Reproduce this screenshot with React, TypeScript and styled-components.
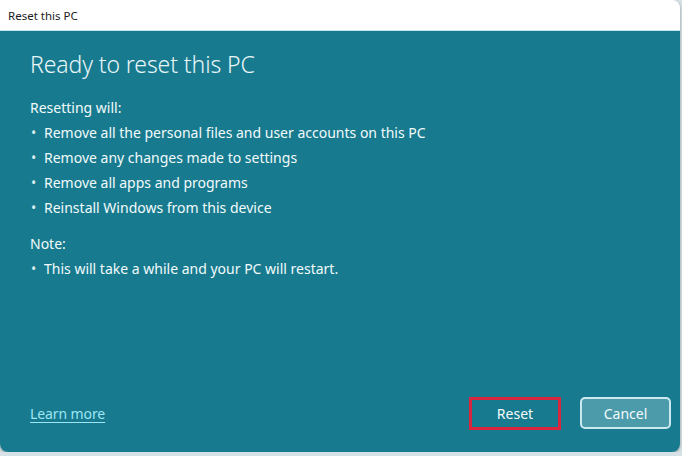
import React from 'react';
import styled, { createGlobalStyle } from 'styled-components';

const GlobalStyle = createGlobalStyle`
  html, body {
    margin: 0;
    padding: 0;
    background: #d6e2e5;
    font-family: "Noto Sans", "Open Sans", sans-serif;
  }
`;

const Window = styled.div`
  width: 680px;
  height: 452px;
  display: flex;
  flex-direction: column;
  border-radius: 0 8px 8px 8px;
  overflow: hidden;
  box-shadow: 0 1px 3px rgba(0, 0, 0, 0.35);
`;

const TitleBar = styled.div`
  height: 30px;
  flex-shrink: 0;
  background: #ffffff;
  border-bottom: 1px solid #bfe6ef;
  display: flex;
  align-items: center;
  padding-left: 8px;
  font-size: 11.5px;
  color: #1b1b1b;
`;

const Body = styled.div`
  flex: 1;
  background: #187a8e;
  color: #f2fafc;
  display: flex;
  flex-direction: column;
  padding: 17px 30px 22px 30px;
`;

const Heading = styled.h1`
  margin: 0 0 18px 0;
  font-size: 23px;
  font-weight: 300;
  letter-spacing: -0.1px;
  color: #e9f6f9;
`;

const Label = styled.div`
  font-size: 14px;
  line-height: 20px;
  margin-bottom: 2px;
`;

const List = styled.ul`
  margin: 0 0 14px 0;
  padding: 0;
  list-style: none;
`;

const Item = styled.li`
  font-size: 14px;
  line-height: 25px;
  display: flex;
  &::before {
    content: '•';
    width: 13px;
    padding-left: 1px;
    color: #d8eef3;
  }
`;

const Spacer = styled.div`
  flex: 1;
`;

const Footer = styled.div`
  display: flex;
  align-items: center;
  justify-content: space-between;
`;

const LearnMore = styled.a`
  font-size: 14px;
  color: #9ee6f5;
  text-decoration: underline;
  text-underline-offset: 3px;
  letter-spacing: -0.1px;
`;

const Buttons = styled.div`
  display: flex;
  gap: 19px;
  margin-right: -21px;
`;

const Button = styled.button<{ $highlight?: boolean }>`
  width: ${({ $highlight }) => ($highlight ? '92px' : '91px')};
  height: ${({ $highlight }) => ($highlight ? '33px' : '32px')};
  box-sizing: border-box;
  font-family: inherit;
  font-size: 14px;
  color: #f2fafc;
  border-radius: ${({ $highlight }) => ($highlight ? '0' : '5px')};
  border: ${({ $highlight }) =>
    $highlight ? '3px solid #d7263d' : '2px solid #cbe9ef'};
  background: ${({ $highlight }) => ($highlight ? '#187a8e' : '#4b9bab')};
`;

export default function App() {
  return (
    <>
      <GlobalStyle />
      <Window>
        <TitleBar>Reset this PC</TitleBar>
        <Body>
          <Heading>Ready to reset this PC</Heading>
          <Label>Resetting will:</Label>
          <List>
            <Item>Remove all the personal files and user accounts on this PC</Item>
            <Item>Remove any changes made to settings</Item>
            <Item>Remove all apps and programs</Item>
            <Item>Reinstall Windows from this device</Item>
          </List>
          <Label>Note:</Label>
          <List>
            <Item>This will take a while and your PC will restart.</Item>
          </List>
          <Spacer />
          <Footer>
            <LearnMore href="#">Learn more</LearnMore>
            <Buttons>
              <Button $highlight>Reset</Button>
              <Button>Cancel</Button>
            </Buttons>
          </Footer>
        </Body>
      </Window>
    </>
  );
}
